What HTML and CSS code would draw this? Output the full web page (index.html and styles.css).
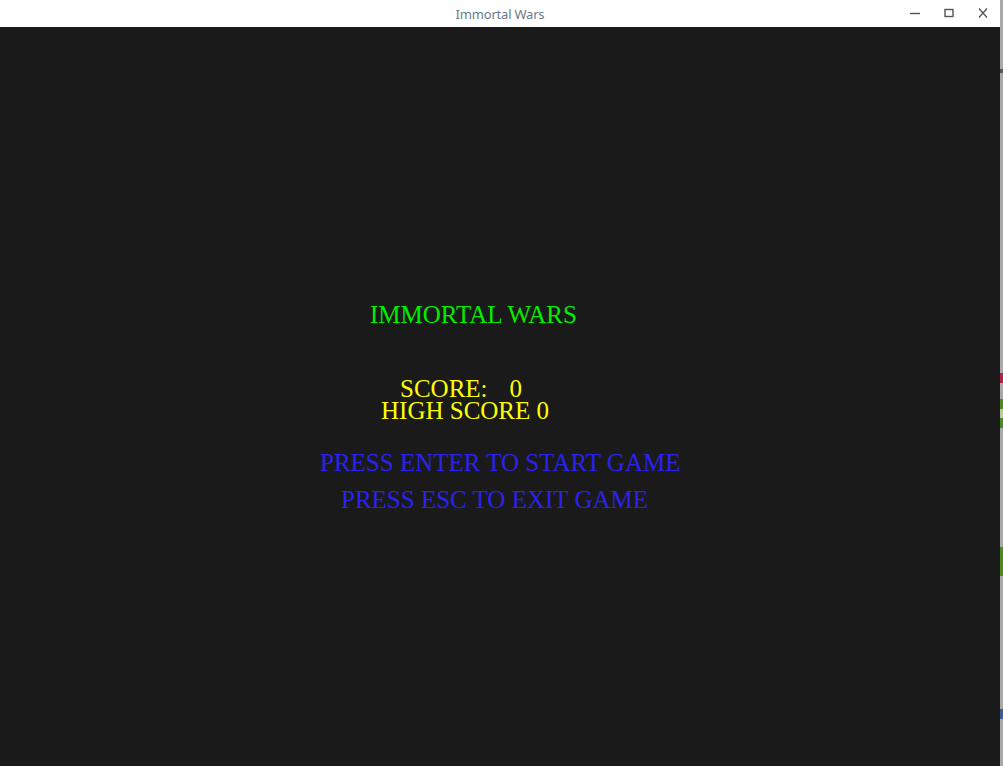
FILE: index.html
```html
<!DOCTYPE html>
<html>
<head>
<meta charset="utf-8">
<title>Immortal Wars</title>
<link rel="stylesheet" href="styles.css">
</head>
<body>
<div class="desktop">
  <div class="window">
    <div class="titlebar">
      <span class="title">Immortal Wars</span>
      <div class="controls">
        <svg class="ctl" width="12" height="12" viewBox="0 0 12 12"><path d="M1 6.5h10" stroke="#555" stroke-width="1.4"/></svg>
        <svg class="ctl" width="12" height="12" viewBox="0 0 12 12"><rect x="2" y="2.5" width="8" height="7" fill="none" stroke="#555" stroke-width="1.4"/></svg>
        <svg class="ctl" width="12" height="12" viewBox="0 0 12 12"><path d="M2 1.5l8 9M10 1.5l-8 9" stroke="#555" stroke-width="1.3"/></svg>
      </div>
    </div>
    <div class="game">
      <div class="line title-line">IMMORTAL WARS</div>
      <div class="line score-line">SCORE:<span class="score-val">0</span></div>
      <div class="line high-line">HIGH SCORE 0</div>
      <div class="line enter-line">PRESS ENTER TO START GAME</div>
      <div class="line esc-line">PRESS ESC TO EXIT GAME</div>
    </div>
  </div>
  <div class="strip">
    <div class="seg s1"></div>
    <div class="seg dark a"></div>
    <div class="seg s2"></div>
    <div class="seg red"></div>
    <div class="seg s3"></div>
    <div class="seg green"></div>
    <div class="seg lightgreen"></div>
    <div class="seg green"></div>
    <div class="seg s4"></div>
    <div class="seg green tall"></div>
    <div class="seg s5"></div>
    <div class="seg blue"></div>
    <div class="seg s6"></div>
  </div>
</div>
</body>
</html>
```
FILE: styles.css
```css
html, body {
  margin: 0;
  padding: 0;
  width: 1003px;
  height: 766px;
  overflow: hidden;
  background: #1a1a1a;
}
.desktop {
  display: flex;
  width: 1003px;
  height: 766px;
}
.window {
  width: 1000px;
  height: 766px;
  display: flex;
  flex-direction: column;
  background: #1a1a1a;
}
.titlebar {
  height: 27px;
  background: #ffffff;
  display: flex;
  align-items: center;
  justify-content: center;
  position: relative;
  flex-shrink: 0;
}
.title {
  font-family: "Noto Sans", "DejaVu Sans", sans-serif;
  font-size: 13px;
  color: #6a7a90;
  letter-spacing: -0.2px;
}
.controls {
  position: absolute;
  right: 11px;
  top: 7px;
  display: flex;
  gap: 22px;
}
.ctl {
  display: block;
}
.game {
  flex: 1;
  padding-top: 277px;
  font-family: "Liberation Serif", "Times New Roman", serif;
  font-size: 25px;
}
.line {
  line-height: 22px;
  white-space: pre;
}
.title-line {
  color: #00ee00;
  padding-left: 370px;
}
.score-line {
  color: #ffff00;
  padding-left: 400px;
  margin-top: 52px;
}
.score-val {
  margin-left: 22px;
}
.high-line {
  color: #ffff00;
  padding-left: 381px;
}
.enter-line {
  color: #2a22ee;
  padding-left: 320px;
  margin-top: 30px;
}
.esc-line {
  color: #2a22ee;
  padding-left: 341px;
  margin-top: 15px;
}
.strip {
  width: 3px;
  height: 766px;
  display: flex;
  flex-direction: column;
  background: #a8a8a8;
}
.seg { width: 3px; }
.s1 { height: 69px; }
.dark { background: #555; height: 4px; }
.s2 { height: 300px; }
.red { background: #b0204a; height: 10px; }
.s3 { height: 16px; }
.green { background: #4a8a20; height: 10px; }
.lightgreen { background: #b8c8a8; height: 9px; }
.s4 { height: 119px; }
.tall { height: 29px; }
.s5 { height: 133px; }
.blue { background: #3a5a9a; height: 10px; }
.s6 { height: 47px; }
```
